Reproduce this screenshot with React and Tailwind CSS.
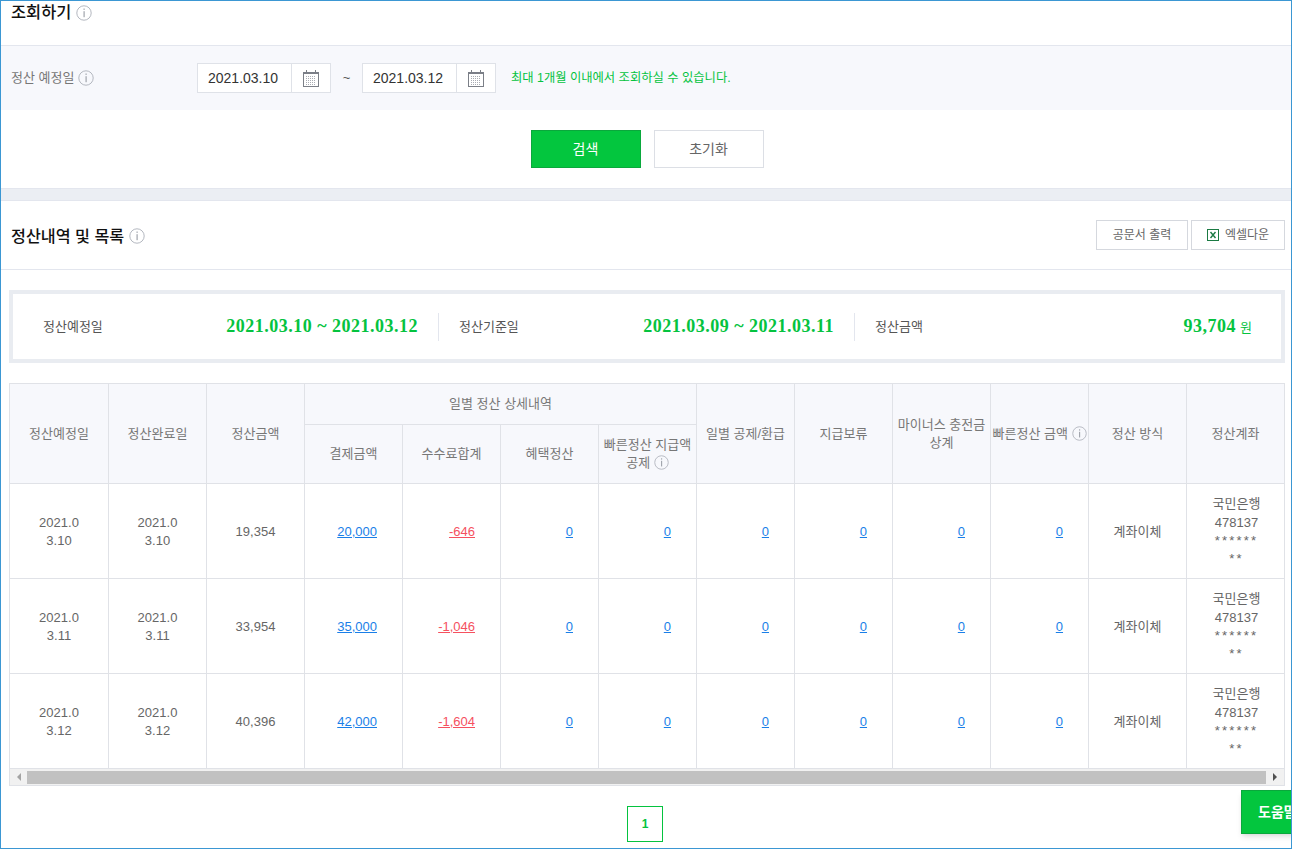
import React from 'react';

const FONT = "font-['Liberation_Sans','Noto_Sans_CJK_KR',sans-serif]";

const InfoIcon = ({ size = 16, className = '' }) => (
  <svg width={size} height={size} viewBox="0 0 16 16" fill="none" className={`inline-block shrink-0 ${className}`}>
    <circle cx="8" cy="8" r="7.2" stroke="#b4b8c0" strokeWidth="1" />
    <rect x="7.5" y="3.5" width="1.2" height="1.4" fill="#a0a4ac" />
    <rect x="7.5" y="6.2" width="1.2" height="6" fill="#a0a4ac" />
  </svg>
);

const CalendarIcon = () => (
  <svg width="16" height="17" viewBox="0 0 16 17" fill="none">
    <rect x="0.5" y="2.5" width="15" height="14" fill="#fff" stroke="#7b7f87" />
    <rect x="0.5" y="2.5" width="15" height="1.5" fill="#7b7f87" />
    <rect x="3" y="0" width="1" height="3" fill="#7b7f87" />
    <rect x="12" y="0" width="1" height="3" fill="#7b7f87" />
    <path d="M3 6.5h10M3 8.5h10M3 10.5h10M3 12.5h10M3 14.5h10" stroke="#a9acb3" strokeDasharray="1 1" />
  </svg>
);

const ExcelIcon = () => (
  <svg width="12" height="12" viewBox="0 0 12 12" fill="none" className="shrink-0">
    <rect x="0.5" y="0.5" width="11" height="11" stroke="#1b7a43" />
    <path d="M3.5 3l5 6M8.5 3l-5 6" stroke="#1b7a43" strokeWidth="1.4" />
  </svg>
);

const DateInput = ({ value }) => (
  <div className="flex h-[30px] w-[134px] border border-[#dfe2e8] bg-white">
    <div className="w-[93px] pl-[10px] text-[14px] leading-[28px] text-[#333]">{value}</div>
    <div className="flex flex-1 items-center justify-center border-l border-[#dfe2e8]">
      <CalendarIcon />
    </div>
  </div>
);

const SummaryItem = ({ label, value, unit, className = '' }) => (
  <div className={`flex h-[28px] items-center justify-between ${className}`}>
    <span className="text-[13px] text-[#555]">{label}</span>
    <span className="text-[#05c33f]">
      <span className="font-['Liberation_Serif',serif] text-[18px] font-bold tracking-[0.5px]">{value}</span>
      {unit && <span className="ml-1 text-[13px] text-[#05c33f]">{unit}</span>}
    </span>
  </div>
);

const thBase = 'border border-[#e0e2e7] bg-[#f7f8fc] px-0 text-[13px] font-normal leading-[18px] text-[#777]';
const tdBase = 'border border-[#e0e2e7] pt-[2px] text-[13px] leading-[18.4px] text-[#666]';

const LinkCell = ({ value, red }) => (
  <td className={`${tdBase} pr-[25px] text-right`}>
    <a className={`underline ${red ? 'text-[#f5515f]' : 'text-[#1a7fe8]'}`}>{value}</a>
  </td>
);

const rows = [
  { date: ['2021.0', '3.10'], amount: '19,354', pay: '20,000', fee: '-646' },
  { date: ['2021.0', '3.11'], amount: '33,954', pay: '35,000', fee: '-1,046' },
  { date: ['2021.0', '3.12'], amount: '40,396', pay: '42,000', fee: '-1,604' },
];

const App = () => {
  return (
    <div className={`relative h-[849px] overflow-hidden border border-[#3b97d3] bg-white ${FONT}`}>
      {/* 조회 영역 */}
      <div className="h-[45px] border-b border-[#e3e6ee] pl-[10px]">
        <h2 className="flex h-[23px] items-center gap-[5px] text-[16.4px] font-medium text-[#111]">
          조회하기 <InfoIcon />
        </h2>
      </div>
      <div className="flex h-[64px] items-center bg-[#f7f8fc] pl-[10px]">
        <div className="flex w-[186px] items-center gap-[4px] text-[13px] text-[#777]">
          정산 예정일 <InfoIcon />
        </div>
        <DateInput value="2021.03.10" />
        <span className="w-[31px] text-center text-[13px] text-[#555]">~</span>
        <DateInput value="2021.03.12" />
        <span className="ml-[15px] mt-[1px] text-[12.3px] text-[#05c33f]">최대 1개월 이내에서 조회하실 수 있습니다.</span>
      </div>
      <div className="flex h-[78px] justify-center gap-[13px] pl-[2px] pt-[20px]">
        <button className="h-[38px] w-[110px] border border-[#0aa83c] bg-[#03c63e] text-[14px] text-white">검색</button>
        <button className="h-[38px] w-[110px] border border-[#dcdfe5] bg-white text-[14px] text-[#666]">초기화</button>
      </div>
      <div className="h-[13px] border-y border-[#e3e6ee] bg-[#ebeef3]" />

      {/* 정산내역 */}
      <div className="flex h-[69px] items-center justify-between border-b border-[#e3e6ee] pl-[10px] pr-[6px]">
        <h2 className="mt-[2px] flex items-center gap-[5px] text-[16.2px] font-medium text-[#111]">
          정산내역 및 목록 <InfoIcon />
        </h2>
        <div className="flex gap-[3px]">
          <button className="h-[30px] w-[92px] border border-[#d5d8de] bg-white text-[12px] text-[#666]">공문서 출력</button>
          <button className="flex h-[30px] w-[94px] items-center justify-center gap-[6px] border border-[#d5d8de] bg-white text-[12px] text-[#666]">
            <ExcelIcon /> 엑셀다운
          </button>
        </div>
      </div>

      <div className="ml-[8px] mr-[6px] mt-[20px] flex h-[73px] items-center border-[4px] border-[#e9ecf1] pl-[30px] pr-[29px]">
        <SummaryItem label="정산예정일" value="2021.03.10 ~ 2021.03.12" className="w-[375px]" />
        <div className="mx-[20px] h-[28px] w-px bg-[#e3e6ee]" />
        <SummaryItem label="정산기준일" value="2021.03.09 ~ 2021.03.11" className="w-[375px]" />
        <div className="mx-[20px] h-[28px] w-px bg-[#e3e6ee]" />
        <SummaryItem label="정산금액" value="93,704" unit="원" className="flex-1" />
      </div>

      <div className="ml-[8px] mr-[6px] mt-[20px] border-b border-[#e0e2e7]">
        <table className="w-[1275px] table-fixed border-collapse">
          <colgroup>
            <col className="w-[99px]" />
            {Array.from({ length: 12 }).map((_, i) => (
              <col key={i} className="w-[98px]" />
            ))}
          </colgroup>
          <thead>
            <tr className="h-[41px]">
              <th rowSpan={2} className={thBase}>정산예정일</th>
              <th rowSpan={2} className={thBase}>정산완료일</th>
              <th rowSpan={2} className={thBase}>정산금액</th>
              <th colSpan={4} className={thBase}>일별 정산 상세내역</th>
              <th rowSpan={2} className={thBase}>일별 공제/환급</th>
              <th rowSpan={2} className={thBase}>지급보류</th>
              <th rowSpan={2} className={thBase}>마이너스 충전금<br />상계</th>
              <th rowSpan={2} className={`${thBase} whitespace-nowrap`}>
                빠른정산 금액 <InfoIcon size={15} className="align-[-3px]" />
              </th>
              <th rowSpan={2} className={thBase}>정산 방식</th>
              <th rowSpan={2} className={thBase}>정산계좌</th>
            </tr>
            <tr className="h-[59px]">
              <th className={thBase}>결제금액</th>
              <th className={thBase}>수수료합계</th>
              <th className={thBase}>혜택정산</th>
              <th className={thBase}>
                빠른정산 지급액<br />공제 <InfoIcon size={15} className="align-[-3px]" />
              </th>
            </tr>
          </thead>
          <tbody>
            {rows.map((row) => (
              <tr key={row.pay} className="h-[95px]">
                <td className={`${tdBase} text-center`}>{row.date[0]}<br />{row.date[1]}</td>
                <td className={`${tdBase} text-center`}>{row.date[0]}<br />{row.date[1]}</td>
                <td className={`${tdBase} text-center`}>{row.amount}</td>
                <LinkCell value={row.pay} />
                <LinkCell value={row.fee} red />
                <LinkCell value="0" />
                <LinkCell value="0" />
                <LinkCell value="0" />
                <LinkCell value="0" />
                <LinkCell value="0" />
                <LinkCell value="0" />
                <td className={`${tdBase} text-center`}>계좌이체</td>
                <td className={`${tdBase} pl-[2px] text-center`}>
                  국민은행<br />478137<br />
                  <span className="tracking-[2.2px]">******</span><br />
                  <span className="tracking-[2.2px]">**</span>
                </td>
              </tr>
            ))}
          </tbody>
        </table>
        {/* 가로 스크롤바 */}
        <div className="flex h-[16px] w-[1276px] items-center border-x border-[#e0e2e7] bg-[#f1f1f1]">
          <div className="flex w-[17px] justify-center">
            <div className="h-0 w-0 border-y-[4px] border-r-[4px] border-y-transparent border-r-[#a3a3a3]" />
          </div>
          <div className="h-[13px] flex-1 bg-[#c1c1c1]" />
          <div className="flex w-[18px] justify-center">
            <div className="h-0 w-0 border-y-[4px] border-l-[4px] border-y-transparent border-l-[#505050]" />
          </div>
        </div>
      </div>

      <div className="mt-[20px] flex justify-center pr-[2px]">
        <a className="flex h-[36px] w-[36px] items-center justify-center border border-[#05c33f] text-[12px] font-bold text-[#05c33f]">1</a>
      </div>

      <button className="absolute left-[1240px] top-[789px] flex h-[44px] w-[80px] items-center whitespace-nowrap border border-[#0aa83c] bg-[#03c63e] pl-[16px] text-[14px] font-bold text-white shadow-md">
        도움말
      </button>
    </div>
  );
};

export default App;
